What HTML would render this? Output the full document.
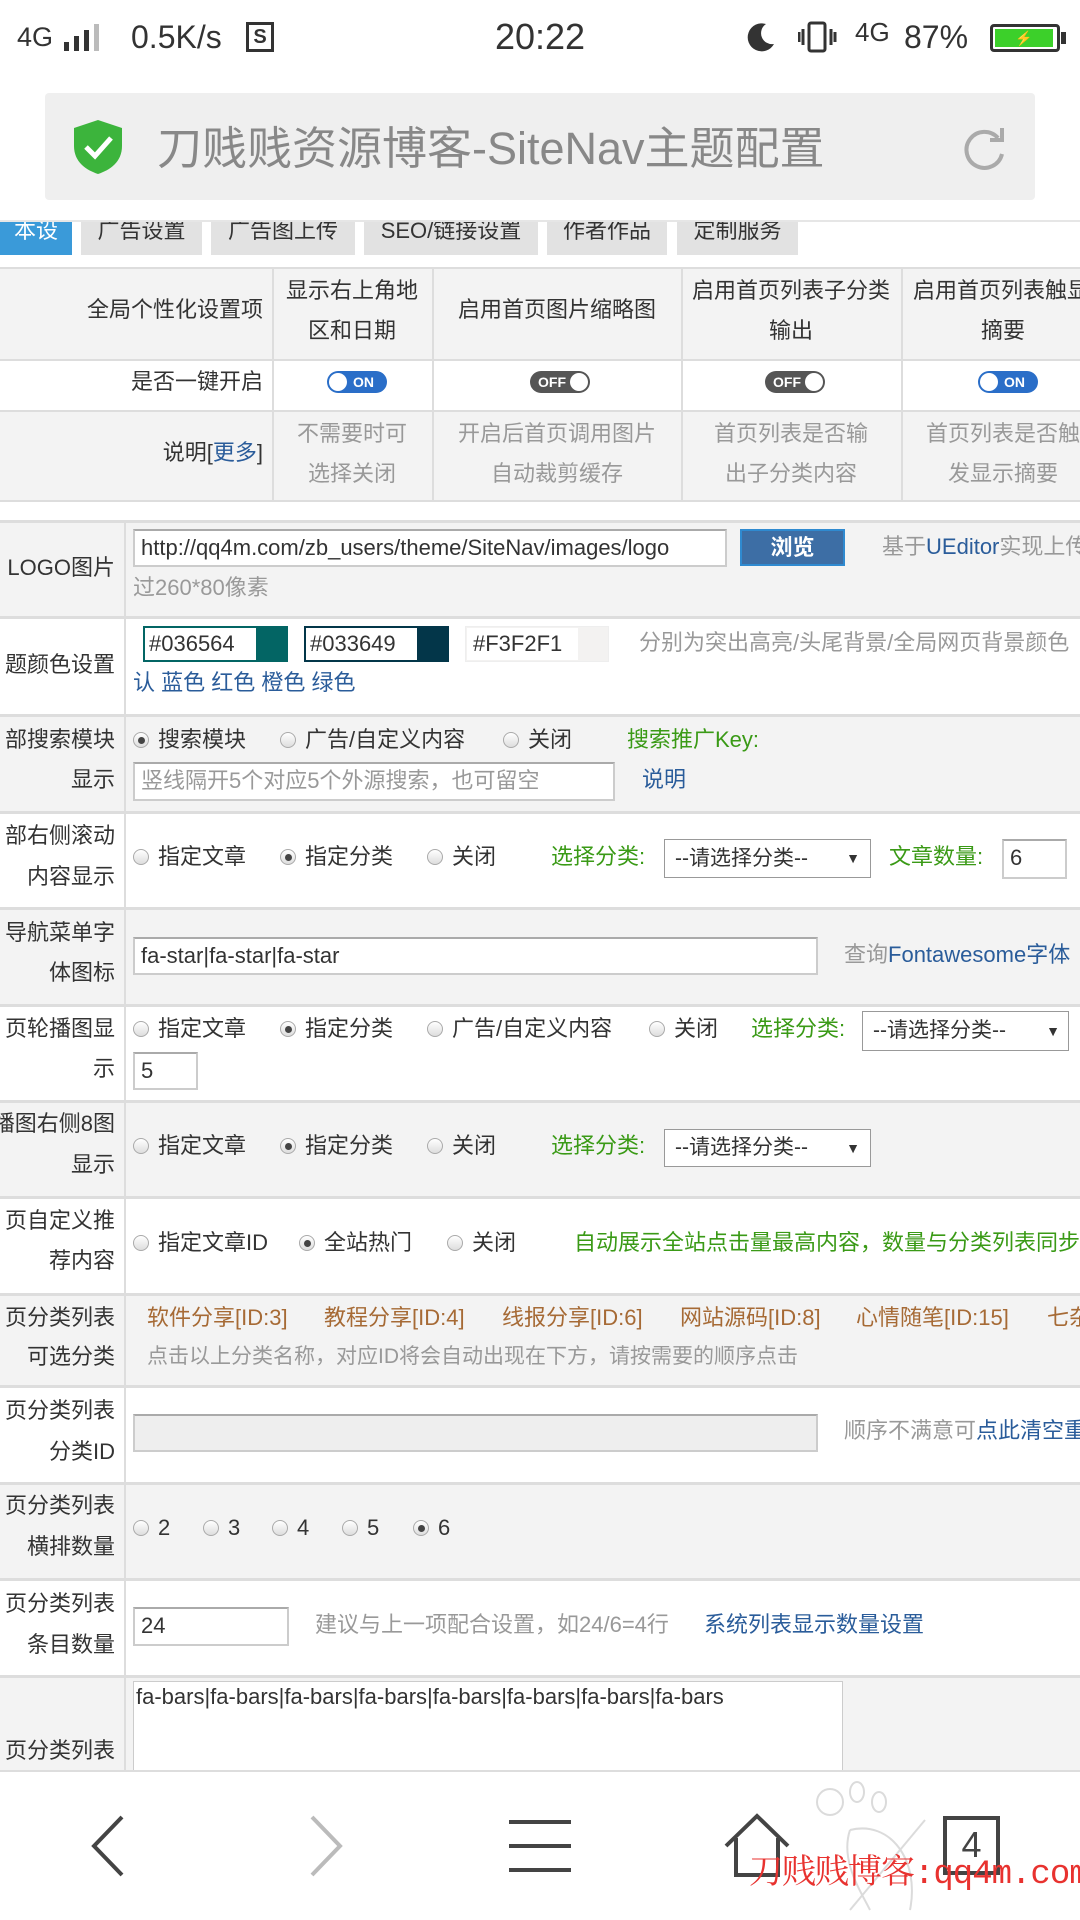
<!DOCTYPE html>
<html><head><meta charset="utf-8"><style>
*{margin:0;padding:0;box-sizing:border-box}
body{width:1080px;height:1920px;overflow:hidden;background:#fff;position:relative;font-family:"Liberation Sans","Noto Sans CJK SC",sans-serif;color:#333;font-size:22px}
.a{position:absolute;white-space:nowrap;line-height:40px;height:40px}
.r{text-align:right}
.c{text-align:center;transform:translateX(-50%)}
.g{color:#999}.b{color:#2a5c9a}.gr{color:#3a9a16}.o{color:#a66a35}
.box{position:absolute}
.row{position:absolute;left:0;width:1080px;border-top:3px solid #ddd}
.inp{position:absolute;border:2px solid #ccc;border-top-color:#aaa;background:#fff;font-size:22px;line-height:34px;padding-left:6px;white-space:nowrap;overflow:hidden}
.sel{position:absolute;border:1px solid #999;background:#fff;font-size:21px;padding-left:10px;white-space:nowrap}
.rd{display:inline-block;width:16px;height:16px;border-radius:50%;border:1px solid #aaa;background:linear-gradient(#fff,#ddd);vertical-align:-1px;margin-right:9px;position:relative}
.rd.on::after{content:"";position:absolute;left:4px;top:4px;width:7px;height:7px;border-radius:50%;background:#444}
.tab{position:absolute;top:211px;height:44px;background:#e2e2e2;font-size:22px;line-height:40px;text-align:center;color:#333}
.tg{position:absolute;width:60px;height:22px;border-radius:11px;top:371px;font-size:14px;font-weight:bold;color:#fff;line-height:22px}
.tg.on{background:#2a6ec8}.tg.off{background:#555}
.tg i{position:absolute;top:2px;width:18px;height:18px;border-radius:50%;background:#fff}
</style></head><body>

<!-- status bar -->
<div class="a" style="left:17px;top:17px;font-size:27px">4G</div>
<svg class="box" style="left:62px;top:24px" width="46" height="28"><rect x="2" y="18" width="5" height="9" fill="#333"/><rect x="12" y="12" width="5" height="15" fill="#333"/><rect x="22" y="6" width="5" height="21" fill="#333"/><rect x="32" y="0" width="5" height="27" fill="#bbb"/></svg>
<div class="a" style="left:131px;top:17px;font-size:32px">0.5K/s</div>
<div class="box" style="left:246px;top:22px;width:28px;height:30px;border:3px solid #333;font-size:20px;text-align:center;line-height:24px;font-weight:bold">S</div>
<div class="a c" style="left:540px;top:17px;font-size:36px">20:22</div>
<svg class="box" style="left:744px;top:20px" width="34" height="34"><path d="M22 4 A14 14 0 1 0 30 24 A11 11 0 0 1 22 4Z" fill="#333"/></svg>
<svg class="box" style="left:798px;top:20px" width="40" height="34"><rect x="11" y="3" width="16" height="28" rx="2" fill="none" stroke="#333" stroke-width="3"/><path d="M5 9v16M1 12v10M33 9v16M37 12v10" stroke="#333" stroke-width="3"/></svg>
<div class="a" style="left:855px;top:12px;font-size:26px">4G</div>
<div class="a" style="left:904px;top:17px;font-size:32px">87%</div>
<div class="box" style="left:990px;top:24px;width:70px;height:28px;border:3px solid #333;border-radius:4px"><div style="margin:2px;height:18px;width:58px;background:#3cd02a;color:#ff0;font-size:14px;text-align:center;line-height:18px">⚡</div></div>
<div class="box" style="left:1061px;top:32px;width:5px;height:12px;background:#333"></div>

<!-- url bar -->
<div class="box" style="left:45px;top:93px;width:990px;height:107px;background:#efefef;border-radius:4px"></div>
<svg class="box" style="left:72px;top:118px" width="52" height="58"><path d="M26 2 L50 10 V28 C50 44 38 52 26 56 C14 52 2 44 2 28 V10Z" fill="#3cb43c"/><path d="M14 29 L23 38 L39 20" stroke="#fff" stroke-width="5" fill="none"/></svg>
<div class="a" style="left:157px;top:124px;font-size:45px;color:#888;height:50px;line-height:50px">刀贱贱资源博客-SiteNav主题配置</div>
<svg class="box" style="left:958px;top:124px" width="50" height="50"><path d="M40 14 A18 18 0 1 0 44 30" stroke="#aaa" stroke-width="4" fill="none"/><path d="M44 4 V16 H32" stroke="#aaa" stroke-width="4" fill="none"/></svg>

<!-- tabs -->
<div class="tab" style="left:0;width:72px;background:#3a9ad9;color:#fff;text-align:right;padding-right:14px">本设置</div>
<div class="tab" style="left:81px;width:121px">广告设置</div>
<div class="tab" style="left:211px;width:144px">广告图上传</div>
<div class="tab" style="left:364px;width:174px">SEO/链接设置</div>
<div class="tab" style="left:547px;width:120px">作者作品</div>
<div class="tab" style="left:677px;width:121px">定制服务</div>
<div class="box" style="left:0;top:200px;width:1080px;height:22px;background:#fff;border-bottom:2px solid #e6e6e6"></div>

<!-- table 1 -->
<div class="box" style="left:0;top:267px;width:1080px;height:92px;background:#f3f3f3;border-top:2px solid #ddd"></div>
<div class="box" style="left:0;top:359px;width:1080px;height:51px;background:#fff;border-top:2px solid #ddd"></div>
<div class="box" style="left:0;top:410px;width:1080px;height:92px;background:#f3f3f3;border-top:2px solid #ddd;border-bottom:2px solid #ddd"></div>
<div class="box" style="left:272px;top:267px;width:2px;height:235px;background:#ddd"></div>
<div class="box" style="left:432px;top:267px;width:2px;height:235px;background:#ddd"></div>
<div class="box" style="left:681px;top:267px;width:2px;height:235px;background:#ddd"></div>
<div class="box" style="left:901px;top:267px;width:2px;height:235px;background:#ddd"></div>
<div class="a r" style="right:817px;top:290px">全局个性化设置项</div>
<div class="a c" style="left:352px;top:271px">显示右上角地</div>
<div class="a c" style="left:352px;top:311px">区和日期</div>
<div class="a c" style="left:557px;top:290px">启用首页图片缩略图</div>
<div class="a c" style="left:791px;top:271px">启用首页列表子分类</div>
<div class="a c" style="left:791px;top:311px">输出</div>
<div class="a" style="left:913px;top:271px">启用首页列表触显</div>
<div class="a c" style="left:1003px;top:311px">摘要</div>
<div class="a r" style="right:817px;top:362px">是否一键开启</div>
<div class="tg on" style="left:327px"><i style="left:2px"></i><span style="position:absolute;left:26px">ON</span></div>
<div class="tg off" style="left:530px"><i style="right:2px"></i><span style="position:absolute;left:8px">OFF</span></div>
<div class="tg off" style="left:765px"><i style="right:2px"></i><span style="position:absolute;left:8px">OFF</span></div>
<div class="tg on" style="left:978px"><i style="left:2px"></i><span style="position:absolute;left:26px">ON</span></div>
<div class="a r" style="right:817px;top:433px">说明[<span class="b">更多</span>]</div>
<div class="a c g" style="left:352px;top:414px">不需要时可</div>
<div class="a c g" style="left:352px;top:454px">选择关闭</div>
<div class="a c g" style="left:557px;top:414px">开启后首页调用图片</div>
<div class="a c g" style="left:557px;top:454px">自动裁剪缓存</div>
<div class="a c g" style="left:791px;top:414px">首页列表是否输</div>
<div class="a c g" style="left:791px;top:454px">出子分类内容</div>
<div class="a c g" style="left:1003px;top:414px">首页列表是否触</div>
<div class="a c g" style="left:1003px;top:454px">发显示摘要</div>

<!-- form rows -->
<div class="row" style="top:520px;height:96px;background:#f3f3f3"></div>
<div class="row" style="top:616px;height:98px;background:#fff"></div>
<div class="row" style="top:714px;height:97px;background:#f3f3f3"></div>
<div class="row" style="top:811px;height:96px;background:#fff"></div>
<div class="row" style="top:907px;height:97px;background:#f3f3f3"></div>
<div class="row" style="top:1004px;height:96px;background:#fff"></div>
<div class="row" style="top:1100px;height:96px;background:#f3f3f3"></div>
<div class="row" style="top:1196px;height:97px;background:#fff"></div>
<div class="row" style="top:1293px;height:92px;background:#f3f3f3"></div>
<div class="row" style="top:1385px;height:97px;background:#fff"></div>
<div class="row" style="top:1482px;height:96px;background:#f3f3f3"></div>
<div class="row" style="top:1578px;height:97px;background:#fff"></div>
<div class="row" style="top:1675px;height:100px;background:#f3f3f3"></div>
<div class="box" style="left:124px;top:520px;width:2px;height:1260px;background:#ddd"></div>

<!-- labels -->
<div class="a r" style="right:965px;top:548px">LOGO图片</div>
<div class="a r" style="right:965px;top:645px">题颜色设置</div>
<div class="a r" style="right:965px;top:720px">部搜索模块</div>
<div class="a r" style="right:965px;top:760px">显示</div>
<div class="a r" style="right:965px;top:816px">部右侧滚动</div>
<div class="a r" style="right:965px;top:857px">内容显示</div>
<div class="a r" style="right:965px;top:913px">导航菜单字</div>
<div class="a r" style="right:965px;top:953px">体图标</div>
<div class="a r" style="right:965px;top:1009px">页轮播图显</div>
<div class="a r" style="right:965px;top:1049px">示</div>
<div class="a r" style="right:965px;top:1104px">播图右侧8图</div>
<div class="a r" style="right:965px;top:1145px">显示</div>
<div class="a r" style="right:965px;top:1201px">页自定义推</div>
<div class="a r" style="right:965px;top:1241px">荐内容</div>
<div class="a r" style="right:965px;top:1298px">页分类列表</div>
<div class="a r" style="right:965px;top:1337px">可选分类</div>
<div class="a r" style="right:965px;top:1391px">页分类列表</div>
<div class="a r" style="right:965px;top:1432px">分类ID</div>
<div class="a r" style="right:965px;top:1486px">页分类列表</div>
<div class="a r" style="right:965px;top:1527px">横排数量</div>
<div class="a r" style="right:965px;top:1584px">页分类列表</div>
<div class="a r" style="right:965px;top:1625px">条目数量</div>
<div class="a r" style="right:965px;top:1731px">页分类列表</div>

<!-- LOGO -->
<div class="inp" style="left:133px;top:529px;width:594px;height:38px">http://qq4m.com/zb_users/theme/SiteNav/images/logo</div>
<div class="box" style="left:740px;top:529px;width:105px;height:37px;background:#3d6ea5;border:2px solid #2f8ad0;color:#fff;font-weight:bold;text-align:center;line-height:33px;font-size:22px">浏览</div>
<div class="a g" style="left:882px;top:527px">基于<span class="b">UEditor</span>实现上传</div>
<div class="a g" style="left:133px;top:568px">过260*80像素</div>

<!-- colors -->
<div class="box" style="left:143px;top:626px;width:145px;height:36px;background:#036564"><div style="width:111px;height:32px;margin:2px;background:#fff;font-size:22px;line-height:32px;padding-left:4px">#036564</div></div>
<div class="box" style="left:304px;top:626px;width:145px;height:36px;background:#033649"><div style="width:111px;height:32px;margin:2px;background:#fff;font-size:22px;line-height:32px;padding-left:4px">#033649</div></div>
<div class="box" style="left:465px;top:626px;width:144px;height:36px;background:#F3F2F1;border:1px solid #eee"><div style="width:111px;height:32px;margin:1px;background:#fff;font-size:22px;line-height:32px;padding-left:6px">#F3F2F1</div></div>
<div class="a g" style="left:639px;top:623px">分别为突出高亮/头尾背景/全局网页背景颜色</div>
<div class="a b" style="left:133px;top:663px">认 蓝色 红色 橙色 绿色</div>

<!-- search -->
<div class="a" style="left:133px;top:720px"><span class="rd on"></span>搜索模块</div>
<div class="a" style="left:280px;top:720px"><span class="rd"></span>广告/自定义内容</div>
<div class="a" style="left:503px;top:720px"><span class="rd"></span>关闭</div>
<div class="a gr" style="left:627px;top:720px">搜索推广Key:</div>
<div class="inp g" style="left:133px;top:762px;width:482px;height:39px;font-size:22px">竖线隔开5个对应5个外源搜索，也可留空</div>
<div class="a b" style="left:642px;top:760px">说明</div>

<!-- scroll -->
<div class="a" style="left:133px;top:837px"><span class="rd"></span>指定文章</div>
<div class="a" style="left:280px;top:837px"><span class="rd on"></span>指定分类</div>
<div class="a" style="left:427px;top:837px"><span class="rd"></span>关闭</div>
<div class="a gr" style="left:551px;top:837px">选择分类:</div>
<div class="sel" style="left:664px;top:839px;width:207px;height:39px;line-height:37px">--请选择分类--<span style="position:absolute;right:10px;font-size:14px">▼</span></div>
<div class="a gr" style="left:889px;top:837px">文章数量:</div>
<div class="inp" style="left:1002px;top:839px;width:65px;height:40px">6</div>

<!-- nav icons -->
<div class="inp" style="left:133px;top:937px;width:685px;height:38px">fa-star|fa-star|fa-star</div>
<div class="a g" style="left:844px;top:935px">查询<span class="b">Fontawesome字体</span></div>

<!-- carousel -->
<div class="a" style="left:133px;top:1009px"><span class="rd"></span>指定文章</div>
<div class="a" style="left:280px;top:1009px"><span class="rd on"></span>指定分类</div>
<div class="a" style="left:427px;top:1009px"><span class="rd"></span>广告/自定义内容</div>
<div class="a" style="left:649px;top:1009px"><span class="rd"></span>关闭</div>
<div class="a gr" style="left:751px;top:1009px">选择分类:</div>
<div class="sel" style="left:862px;top:1011px;width:207px;height:40px;line-height:38px">--请选择分类--<span style="position:absolute;right:8px;font-size:14px">▼</span></div>
<div class="inp" style="left:133px;top:1052px;width:65px;height:38px">5</div>

<!-- 8 img -->
<div class="a" style="left:133px;top:1126px"><span class="rd"></span>指定文章</div>
<div class="a" style="left:280px;top:1126px"><span class="rd on"></span>指定分类</div>
<div class="a" style="left:427px;top:1126px"><span class="rd"></span>关闭</div>
<div class="a gr" style="left:551px;top:1126px">选择分类:</div>
<div class="sel" style="left:664px;top:1129px;width:207px;height:38px;line-height:36px">--请选择分类--<span style="position:absolute;right:10px;font-size:14px">▼</span></div>

<!-- recommend -->
<div class="a" style="left:133px;top:1223px"><span class="rd"></span>指定文章ID</div>
<div class="a" style="left:299px;top:1223px"><span class="rd on"></span>全站热门</div>
<div class="a" style="left:447px;top:1223px"><span class="rd"></span>关闭</div>
<div class="a gr" style="left:574px;top:1223px">自动展示全站点击量最高内容，数量与分类列表同步</div>

<!-- categories -->
<div class="a o" style="left:147px;top:1298px">软件分享[ID:3]</div>
<div class="a o" style="left:324px;top:1298px">教程分享[ID:4]</div>
<div class="a o" style="left:502px;top:1298px">线报分享[ID:6]</div>
<div class="a o" style="left:680px;top:1298px">网站源码[ID:8]</div>
<div class="a o" style="left:856px;top:1298px">心情随笔[ID:15]</div>
<div class="a o" style="left:1047px;top:1298px">七杂</div>
<div class="a g" style="left:147px;top:1337px;font-size:21px">点击以上分类名称，对应ID将会自动出现在下方，请按需要的顺序点击</div>

<div class="inp" style="left:133px;top:1414px;width:685px;height:38px;background:#eee"></div>
<div class="a g" style="left:844px;top:1411px">顺序不满意可<span class="b">点此清空重</span></div>

<div class="a" style="left:133px;top:1508px"><span class="rd"></span>2</div>
<div class="a" style="left:203px;top:1508px"><span class="rd"></span>3</div>
<div class="a" style="left:272px;top:1508px"><span class="rd"></span>4</div>
<div class="a" style="left:342px;top:1508px"><span class="rd"></span>5</div>
<div class="a" style="left:413px;top:1508px"><span class="rd on"></span>6</div>

<div class="inp" style="left:133px;top:1607px;width:156px;height:39px">24</div>
<div class="a g" style="left:315px;top:1605px">建议与上一项配合设置，如24/6=4行</div>
<div class="a b" style="left:704px;top:1605px">系统列表显示数量设置</div>

<div class="box" style="left:133px;top:1681px;width:710px;height:100px;background:#fff;border:1px solid #ccc;font-size:22px;line-height:30px;padding-left:2px">fa-bars|fa-bars|fa-bars|fa-bars|fa-bars|fa-bars|fa-bars|fa-bars</div>

<!-- bottom nav -->
<div class="box" style="left:0;top:1770px;width:1080px;height:150px;background:#fff;border-top:2px solid #ddd"></div>
<svg class="box" style="left:88px;top:1815px" width="40" height="62"><path d="M34 2 L6 31 L34 60" stroke="#444" stroke-width="4" fill="none"/></svg>
<svg class="box" style="left:306px;top:1815px" width="40" height="62"><path d="M6 2 L34 31 L6 60" stroke="#bbb" stroke-width="4" fill="none"/></svg>
<svg class="box" style="left:507px;top:1818px" width="66" height="56"><path d="M2 4H64M2 28H64M2 52H64" stroke="#444" stroke-width="4"/></svg>
<svg class="box" style="left:722px;top:1812px" width="70" height="66"><path d="M4 34 L35 4 L66 34 M14 26 V63 H56 V26" stroke="#444" stroke-width="4" fill="none"/></svg>
<svg class="box" style="left:810px;top:1780px" width="130" height="140" opacity="0.35"><circle cx="20" cy="22" r="13" fill="none" stroke="#999" stroke-width="2"/><ellipse cx="47" cy="12" rx="7" ry="10" fill="none" stroke="#999" stroke-width="2"/><ellipse cx="69" cy="22" rx="7" ry="10" fill="none" stroke="#999" stroke-width="2"/><path d="M40 50 C80 40 110 80 100 130 M40 50 C30 80 50 110 60 130" fill="none" stroke="#999" stroke-width="2"/><path d="M115 40 L40 130" stroke="#999" stroke-width="2"/></svg>
<div class="box" style="left:943px;top:1816px;width:57px;height:59px;border:4px solid #444;font-size:36px;text-align:center;line-height:50px;color:#444">4</div>
<div class="a" style="left:749px;top:1850px;font-size:34px;color:#e8322f;font-family:'Liberation Mono','Noto Serif CJK SC',monospace;line-height:50px;height:50px;letter-spacing:-1px">刀贱贱博客:qq4m.com</div>
</body></html>
